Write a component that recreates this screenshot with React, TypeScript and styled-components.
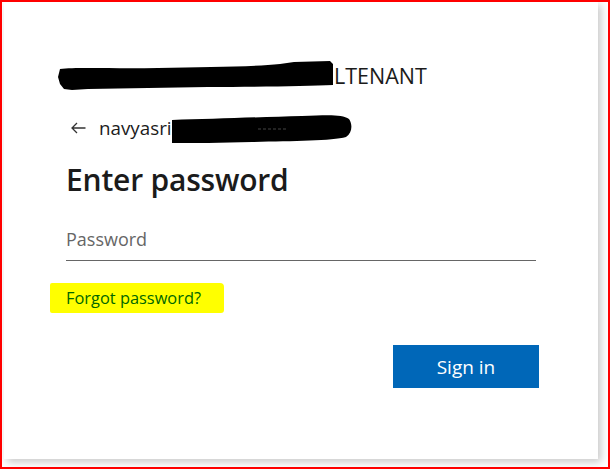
import React from "react";
import styled, { createGlobalStyle } from "styled-components";

const GlobalStyle = createGlobalStyle`
  html, body {
    margin: 0;
    padding: 0;
    background: #fff;
  }
  * {
    box-sizing: border-box;
  }
`

const Frame = styled.div`
  width: 610px;
  height: 469px;
  border: 2px solid #ff0000;
  padding-left: 2px;
  background: #fff;
  overflow: hidden;
`

const Card = styled.div`
  display: flex;
  flex-direction: column;
  width: 594px;
  height: 457px;
  padding: 60px 59px 0 62px;
  background: #fff;
  box-shadow: 3px 3px 8px rgba(0, 0, 0, 0.22);
  font-family: "Open Sans", "Noto Sans", sans-serif;
  color: #1b1b1b;
`

const Tenant = styled.div`
  display: flex;
  align-items: center;
  height: 28px;
  font-size: 21.5px;
  line-height: 28px;
  color: #1b1b1b;
`

const Scribble = styled.svg<{ $offset?: number }>`
  flex: none;
  display: block;
  margin-left: ${(p) => p.$offset || 0}px;
`

const BackRow = styled.div`
  display: flex;
  align-items: center;
  height: 24px;
  margin-top: 26px;
  font-size: 18.8px;
  line-height: 24px;
`

const BackArrow = styled.svg`
  flex: none;
  margin-left: 5px;
  margin-right: 13px;
`

const Title = styled.h1`
  margin: 22px 0 0;
  font-size: 30px;
  line-height: 36px;
  font-weight: 600;
  letter-spacing: -0.2px;
  color: #1b1b1b;
`

const PasswordInput = styled.input`
  width: 470px;
  height: 36px;
  margin-top: 27px;
  padding: 0 0 8px;
  border: none;
  border-bottom: 1px solid #666;
  outline: none;
  background: transparent;
  font-family: "Open Sans", "Noto Sans", sans-serif;
  font-size: 18px;
  color: #1b1b1b;

  &::placeholder {
    color: #666;
  }
`

const LinkRow = styled.div`
  display: flex;
  margin-top: 22px;
`

const Marker = styled.span`
  display: inline-block;
  height: 30px;
  margin-left: -16px;
  padding: 0 23px 0 16px;
  background: #ffff00;
  border-radius: 2px 4px 3px 2px;
`

const ForgotLink = styled.a`
  font-size: 16.4px;
  line-height: 30px;
  color: #006700;
  text-decoration: none;
  cursor: pointer;
`

const Actions = styled.div`
  display: flex;
  justify-content: flex-end;
  margin-top: 32px;
`

const SignInButton = styled.button`
  width: 146px;
  height: 43px;
  border: none;
  background: #0067b8;
  color: #fff;
  font-family: "Open Sans", "Noto Sans", sans-serif;
  font-size: 19px;
  line-height: 43px;
  padding: 1px 0 0;
  cursor: pointer;
`

const App: React.FC = () => {
  return (
    <Frame>
      <GlobalStyle />
      <Card>
        <Tenant>
          <Scribble $offset={-8} width="276" height="30" viewBox="0 0 276 30">
            <path
              d="M2 8 C20 6 60 8 100 7 C150 6 195 6 222 3 L236 1 L272 0 L275 3 L275 24 C250 25 200 26 150 26 C110 27 70 27 30 28 L14 29 L6 28 L2 23 L0 16 Z"
              fill="#000"
            />
          </Scribble>
          <span>LTENANT</span>
        </Tenant>
        <BackRow>
          <BackArrow width="15" height="12" viewBox="0 0 15 12">
            <path d="M14.5 6 H1 M6 1 L1 6 L6 11" fill="none" stroke="#333" strokeWidth="1.3" />
          </BackArrow>
          <span>navyasri</span>
          <Scribble width="180" height="30" viewBox="0 0 180 30">
            <path
              d="M0 7 C40 6 90 4 130 3 C155 2 170 1 177 6 C181 12 180 20 174 24 C160 28 120 28 80 29 C50 30 20 30 0 30 Z"
              fill="#000"
            />
            <path d="M86 16 H116" stroke="#555" strokeWidth="0.8" strokeDasharray="3 2" />
          </Scribble>
        </BackRow>
        <Title>Enter password</Title>
        <PasswordInput type="password" placeholder="Password" />
        <LinkRow>
          <Marker>
            <ForgotLink>Forgot password?</ForgotLink>
          </Marker>
        </LinkRow>
        <Actions>
          <SignInButton>Sign in</SignInButton>
        </Actions>
      </Card>
    </Frame>
  );
};

export default App;
